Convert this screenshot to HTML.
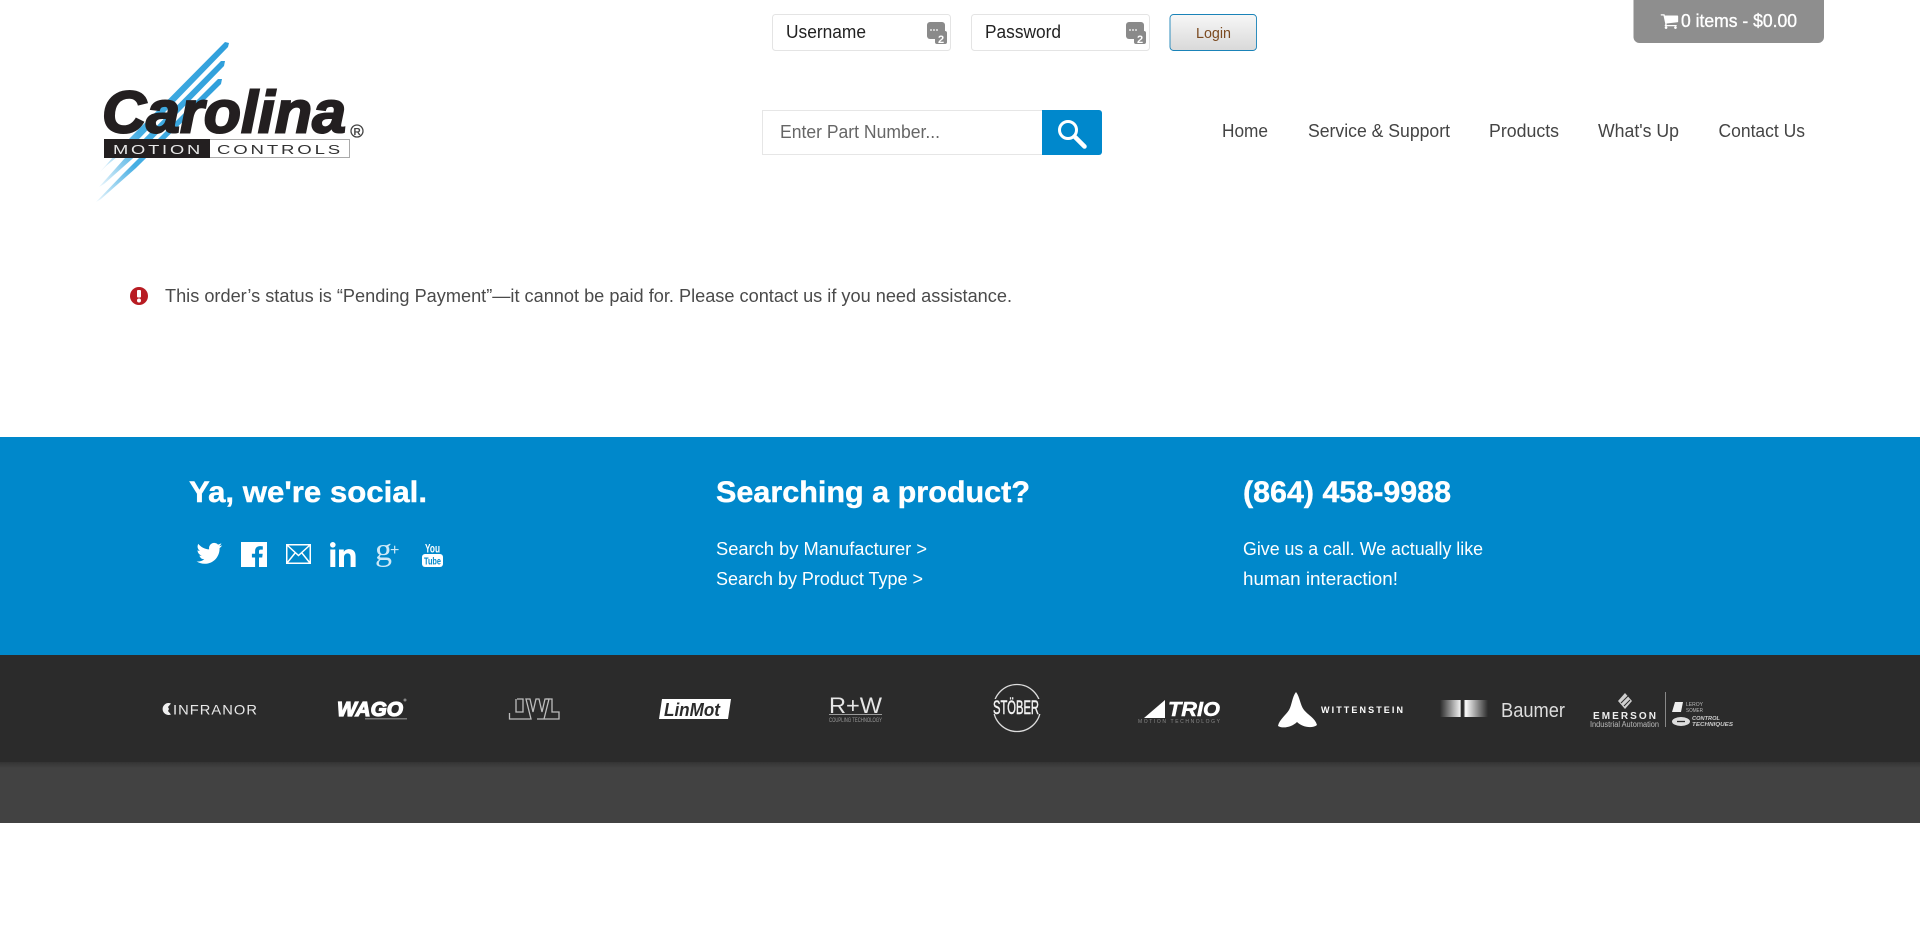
<!DOCTYPE html>
<html lang="en"><head><meta charset="utf-8"><title>Carolina Motion Controls</title>
<style>
html,body{margin:0;padding:0;background:#fff;width:1920px;height:949px;overflow:hidden}
svg{display:block}
text{font-family:"Liberation Sans",sans-serif}
</style></head><body>
<svg xmlns="http://www.w3.org/2000/svg" width="1920" height="949" viewBox="0 0 1920 949">
<defs>
<linearGradient id="loginG" x1="0" y1="0" x2="0" y2="1"><stop offset="0" stop-color="#f7f7f7"/><stop offset="1" stop-color="#d9d9d9"/></linearGradient>
<linearGradient id="shadow" x1="0" y1="0" x2="0" y2="1"><stop offset="0" stop-color="#343434"/><stop offset="1" stop-color="#424242"/></linearGradient>
<linearGradient id="stripe" x1="1" y1="0" x2="0" y2="1"><stop offset="0" stop-color="#2f9fdb"/><stop offset=".7" stop-color="#45aee3"/><stop offset="1" stop-color="#45aee3" stop-opacity=".1"/></linearGradient>
<linearGradient id="baum" x1="0" y1="0" x2="1" y2="0"><stop offset="0" stop-color="#2b2b2b"/><stop offset=".42" stop-color="#eee"/><stop offset=".44" stop-color="#2b2b2b"/><stop offset=".49" stop-color="#2b2b2b"/><stop offset=".53" stop-color="#fff"/><stop offset="1" stop-color="#2b2b2b"/></linearGradient>
</defs>

<!-- logo -->
<g>
<polygon points="225,42 229,43 228,47 140,138 106,166 100,172 128,140" fill="url(#stripe)"/>
<polygon points="221,61 225,61 224,66 140,152 104,184 99,187 125,158" fill="url(#stripe)"/>
<polygon points="218,79 222,79 221,84 136,168 101,199 96,202 122,175" fill="url(#stripe)"/>
<text x="102" y="132.500" font-size="59" font-weight="bold" font-style="italic" fill="#231f20" stroke="#231f20" stroke-width="2" textLength="244" lengthAdjust="spacingAndGlyphs">Carolina</text>
<rect x="104.500" y="139.500" width="245" height="18" fill="#fff" stroke="#aaa"/>
<rect x="104" y="139" width="106" height="19" fill="#231f20"/>
<text x="113" y="154" font-size="13" letter-spacing="2" fill="#e8e8e8" textLength="90" lengthAdjust="spacingAndGlyphs">MOTION</text>
<text x="217" y="154" font-size="13" letter-spacing="2" fill="#333" textLength="126" lengthAdjust="spacingAndGlyphs">CONTROLS</text>
<circle cx="357" cy="131" r="6" fill="none" stroke="#444" stroke-width="1.300"/>
<text x="353.500" y="135" font-size="10" font-weight="bold" fill="#444">R</text>
</g>

<!-- login -->
<rect x="772.500" y="14.500" width="178" height="36" rx="3" fill="#fff" stroke="#e4e4e4"/>
<text x="786" y="38" font-size="18" fill="#222" textLength="80" lengthAdjust="spacingAndGlyphs">Username</text>
<g><rect x="927" y="22" width="18" height="17" rx="3" fill="#8a8a8a"/><rect x="935" y="31" width="12" height="13" rx="2" fill="#8a8a8a"/><circle cx="931" cy="30" r=".9" fill="#fff"/><circle cx="934" cy="30" r=".9" fill="#fff"/><circle cx="937" cy="30" r=".9" fill="#fff"/><text x="938" y="43" font-size="11" font-weight="bold" fill="#fff">2</text></g>
<rect x="971.500" y="14.500" width="178" height="36" rx="3" fill="#fff" stroke="#e4e4e4"/>
<text x="985" y="38" font-size="18" fill="#222" textLength="76" lengthAdjust="spacingAndGlyphs">Password</text>
<g><rect x="1126" y="22" width="18" height="17" rx="3" fill="#8a8a8a"/><rect x="1134" y="31" width="12" height="13" rx="2" fill="#8a8a8a"/><circle cx="1130" cy="30" r=".9" fill="#fff"/><circle cx="1133" cy="30" r=".9" fill="#fff"/><circle cx="1136" cy="30" r=".9" fill="#fff"/><text x="1137" y="43" font-size="11" font-weight="bold" fill="#fff">2</text></g>
<rect x="1170" y="14.500" width="86.500" height="36" rx="3.500" fill="url(#loginG)" stroke="#1a83b8" stroke-width=".9"/>
<text x="1196" y="38" font-size="15" fill="#7b4a20" textLength="35" lengthAdjust="spacingAndGlyphs">Login</text>

<!-- cart -->
<path d="M1633.500 0H1824V37a6 6 0 0 1-6 6H1639.500a6 6 0 0 1-6-6z" fill="#8e8e8e"/>
<path transform="translate(1660,11.500) scale(.0105)" fill="#fff" d="M704 1536q0 52-38 90t-90 38-90-38-38-90 38-90 90-38 90 38 38 90zm896 0q0 52-38 90t-90 38-90-38-38-90 38-90 90-38 90 38 38 90zm128-1088v512q0 24-16.500 42.500t-40.500 21.500l-1044 122q13 60 13 70 0 16-24 64h920q26 0 45 19t19 45-19 45-45 19h-1024q-26 0-45-19t-19-45q0-11 8-31.500t16-36 21.500-40 15.500-29.500l-177-823h-204q-26 0-45-19t-19-45 19-45 45-19h256q16 0 28.500 6.500t19.500 15.500 13 24.500 8 26 5.500 29.500 4.500 26h1201q26 0 45 19t19 45z"/>
<text x="1681" y="27" font-size="18" fill="#fff" stroke="#fff" stroke-width=".35" textLength="116" lengthAdjust="spacingAndGlyphs">0 items - $0.00</text>

<!-- search -->
<rect x="762.500" y="110.500" width="280" height="44" fill="#fff" stroke="#e6e6e6"/>
<text x="780" y="138" font-size="18" fill="#666" textLength="160" lengthAdjust="spacingAndGlyphs">Enter Part Number...</text>
<path d="M1042 110h57a3 3 0 0 1 3 3v39a3 3 0 0 1-3 3h-57z" fill="#0088cc"/>
<circle cx="1068" cy="130" r="8.500" fill="none" stroke="#fff" stroke-width="3"/>
<path d="M1074.500 136.500L1084.500 146.500" stroke="#fff" stroke-width="4.500" stroke-linecap="round"/>

<!-- nav -->
<g font-size="18" fill="#444">
<text x="1222" y="137" textLength="46" lengthAdjust="spacingAndGlyphs">Home</text>
<text x="1308" y="137" textLength="142" lengthAdjust="spacingAndGlyphs">Service &amp; Support</text>
<text x="1489" y="137" textLength="70" lengthAdjust="spacingAndGlyphs">Products</text>
<text x="1598" y="137" textLength="81" lengthAdjust="spacingAndGlyphs">What's Up</text>
<text x="1718.500" y="137" textLength="86.500" lengthAdjust="spacingAndGlyphs">Contact Us</text>
</g>

<!-- notice -->
<circle cx="139" cy="296" r="9" fill="#b81c23"/>
<rect x="137" y="290" width="4" height="7.500" rx="1" fill="#fff"/><circle cx="139" cy="300.500" r="2" fill="#fff"/>
<text x="165" y="302" font-size="18" fill="#4a4a4a" textLength="847" lengthAdjust="spacingAndGlyphs">This order’s status is “Pending Payment”—it cannot be paid for. Please contact us if you need assistance.</text>

<!-- blue footer -->
<rect x="0" y="437" width="1920" height="218" fill="#0088cb"/>
<g fill="#fff">
<g font-size="30" font-weight="bold" stroke="#fff" stroke-width=".4">
<text x="189" y="502" textLength="238" lengthAdjust="spacingAndGlyphs">Ya, we're social.</text>
<text x="716" y="502" textLength="314" lengthAdjust="spacingAndGlyphs">Searching a product?</text>
<text x="1243" y="502" textLength="208" lengthAdjust="spacingAndGlyphs">(864) 458-9988</text>
</g>
<g font-size="18.500">
<text x="716" y="555" textLength="211" lengthAdjust="spacingAndGlyphs">Search by Manufacturer &gt;</text>
<text x="716" y="585" textLength="207" lengthAdjust="spacingAndGlyphs">Search by Product Type &gt;</text>
<text x="1243" y="555" textLength="240" lengthAdjust="spacingAndGlyphs">Give us a call. We actually like</text>
<text x="1243" y="585" textLength="155" lengthAdjust="spacingAndGlyphs">human interaction!</text>
</g>
<!-- twitter -->
<path transform="translate(196.500,540.500) scale(1.070)" d="M23.950 4.570a10 10 0 0 1-2.820.770 4.960 4.960 0 0 0 2.160-2.720c-.950.550-2 .960-3.120 1.190a4.920 4.920 0 0 0-8.380 4.480C7.690 8.100 4.070 6.130 1.640 3.160a4.820 4.820 0 0 0-.660 2.480c0 1.710.870 3.200 2.190 4.100a4.900 4.900 0 0 1-2.230-.620v.060a4.920 4.920 0 0 0 3.950 4.830 5 5 0 0 1-2.210.080 4.940 4.940 0 0 0 4.600 3.420A9.870 9.870 0 0 1 0 19.540a14 14 0 0 0 7.560 2.210c9.050 0 14-7.500 14-13.980 0-.210 0-.420-.020-.630A9.940 9.940 0 0 0 24 4.590z"/>
<!-- facebook -->
<path transform="translate(241,542)" d="M0 0h26v25H18V15.500h3.200l.5-3.700H18V9.400c0-1.100.300-1.800 1.800-1.800h2V4.300c-.400 0-1.500-.200-2.900-.200-2.800 0-4.800 1.700-4.800 4.900v2.800h-3.200v3.700h3.200V25H0z"/>
<!-- mail -->
<g fill="none" stroke="#fff" stroke-width="1.500"><rect x="286.750" y="544.750" width="23.500" height="18.500"/><path d="M287 545l11.500 10.500L310 545M287 563l8.500-10.500M310 563l-8.500-10.500"/></g>
<!-- linkedin -->
<circle cx="332.800" cy="544.800" r="2.800"/><rect x="330.300" y="549.500" width="5" height="17.500"/>
<path d="M339 549.500h4.800v2.400c1-1.700 2.800-2.800 5.200-2.800 4.600 0 6.600 2.800 6.600 7.400V567h-5v-9.600c0-2.600-.900-4-3-4-2.100 0-3.600 1.500-3.600 4V567h-5z"/>
<!-- gplus -->
<text x="375" y="560" font-size="32" fill="#cfe9f7" textLength="17" lengthAdjust="spacingAndGlyphs" style="font-family:'Liberation Serif',serif">g</text>
<text x="390" y="555" font-size="16" fill="#cfe9f7">+</text>
<!-- youtube -->
<text x="425" y="552.500" font-size="12" font-weight="bold" textLength="15" lengthAdjust="spacingAndGlyphs">You</text>
<rect x="422" y="554" width="21" height="13" rx="3"/>
<text x="424" y="564.500" font-size="10" font-weight="bold" fill="#0088cb" textLength="17" lengthAdjust="spacingAndGlyphs">Tube</text>
</g>

<!-- dark strip -->
<rect x="0" y="655" width="1920" height="107" fill="#2b2b2b"/>
<rect x="0" y="762" width="1920" height="61" fill="#424242"/>
<rect x="0" y="762" width="1920" height="6" fill="url(#shadow)"/>

<!-- brand logos -->
<g fill="#f0f0f0">
<!-- Infranor -->
<path d="M171 703.500a6 6 0 1 0 0 11l-3-3.500 1-2-1-2z"/>
<text x="173" y="714.500" font-size="14" letter-spacing="1" fill="#e8e8e8" textLength="85" lengthAdjust="spacingAndGlyphs">INFRANOR</text>
<!-- Wago -->
<text x="337" y="716" font-size="20" font-weight="bold" font-style="italic" fill="#fff" stroke="#fff" stroke-width="1.200" textLength="66" lengthAdjust="spacingAndGlyphs">WAGO</text>
<circle cx="405" cy="700" r="1.500" fill="#888"/>
<rect x="365" y="718" width="42" height="1.500" fill="#777"/>
<!-- JWL -->
<g fill="none" stroke="#bdbdbd" stroke-width="1.300"><path d="M517 699h6v13h-7v-13M509.500 713v6h21.500l-5-20h4l3 13 3-13h3l3 13 3-13h4l-5 20"/><path d="M546 699h6v13h7v7h-22"/></g>
<!-- LinMot -->
<polygon points="662,699 731,699 728,719 659,719" fill="#fff"/>
<text x="664" y="716" font-size="18" font-weight="bold" font-style="italic" fill="#2b2b2b" textLength="56" lengthAdjust="spacingAndGlyphs">LinMot</text>
<!-- R+W -->
<text x="829" y="713" font-size="22" fill="#e6e6e6" textLength="53" lengthAdjust="spacingAndGlyphs">R+W</text>
<rect x="829" y="714" width="53" height="1" fill="#999"/>
<text x="829" y="722" font-size="6" fill="#999" textLength="53" lengthAdjust="spacingAndGlyphs">COUPLING TECHNOLOGY</text>
<!-- Stober -->
<circle cx="1017" cy="708" r="23.500" fill="none" stroke="#ddd" stroke-width="1.300"/>
<rect x="990" y="699" width="52" height="15" fill="#2b2b2b"/>
<text x="993" y="714" font-size="19" fill="#f2f2f2" stroke="#f2f2f2" stroke-width=".5" textLength="46" lengthAdjust="spacingAndGlyphs">STÖBER</text>
<!-- Trio -->
<polygon points="1144,718 1165,700 1165,718" fill="#fff"/>
<text x="1168" y="716" font-size="20" font-weight="bold" font-style="italic" fill="#fff" stroke="#fff" stroke-width=".5" textLength="52" lengthAdjust="spacingAndGlyphs">TRIO</text>
<text x="1138" y="723" font-size="5" fill="#888" textLength="82" lengthAdjust="spacing">MOTION TECHNOLOGY</text>
<!-- Wittenstein -->
<path d="M1296 692C1300 697 1300 705 1304 710C1308 715 1315 718 1317 725C1312 729 1302 727 1297 722C1292 727 1283 729 1278 726C1279 720 1286 715 1289 710C1292 705 1292 697 1296 692z" fill="#fff"/>
<text x="1321" y="713" font-size="9" font-weight="bold" fill="#fff" textLength="82" lengthAdjust="spacing">WITTENSTEIN</text>
<!-- Baumer -->
<rect x="1440" y="700" width="48" height="17" fill="url(#baum)"/>
<text x="1501" y="717" font-size="20" fill="#ddd" textLength="64" lengthAdjust="spacingAndGlyphs">Baumer</text>
<!-- Emerson -->
<polygon points="1625,693 1632,701 1625,709 1618,701" fill="#cfcfcf"/>
<path d="M1621 703l8-8M1624 706l6-6" stroke="#2b2b2b" stroke-width="1"/>
<text x="1593" y="719" font-size="10" font-weight="bold" fill="#eee" textLength="63" lengthAdjust="spacing">EMERSON</text>
<text x="1590" y="727" font-size="8" fill="#bbb" textLength="69" lengthAdjust="spacingAndGlyphs">Industrial Automation</text>
<rect x="1665" y="692" width="1" height="35" fill="#888"/>
<polygon points="1675,702 1683,702 1681,712 1672,712" fill="#eee"/>
<text x="1686" y="706" font-size="5" fill="#bbb" textLength="17" lengthAdjust="spacingAndGlyphs">LEROY</text>
<text x="1686" y="712" font-size="5" fill="#bbb" textLength="17" lengthAdjust="spacingAndGlyphs">SOMER</text>
<ellipse cx="1681" cy="721.500" rx="9" ry="4.500" fill="#ddd"/>
<path d="M1677 721.500h8" stroke="#2b2b2b" stroke-width="1.300"/>
<text x="1692" y="720" font-size="5.500" font-weight="bold" font-style="italic" fill="#ccc" textLength="28" lengthAdjust="spacingAndGlyphs">CONTROL</text>
<text x="1692" y="726" font-size="5.500" font-weight="bold" font-style="italic" fill="#ccc" textLength="41" lengthAdjust="spacingAndGlyphs">TECHNIQUES</text>
</g>
</svg>
</body></html>
